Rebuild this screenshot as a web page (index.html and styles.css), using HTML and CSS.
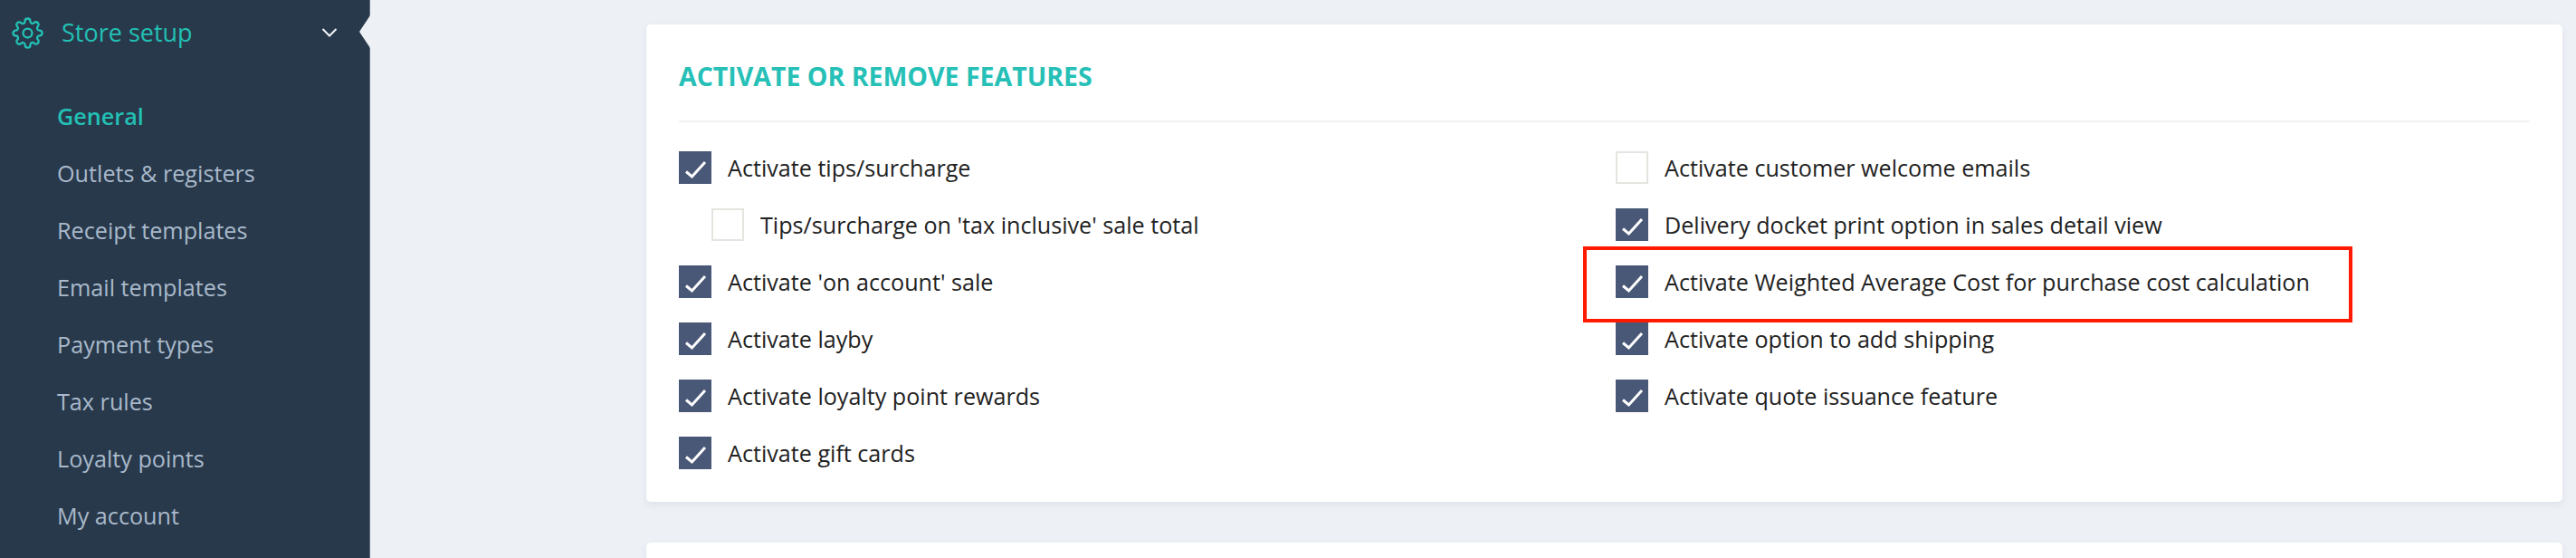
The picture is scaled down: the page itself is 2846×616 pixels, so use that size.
FILE: index.html
```html
<!DOCTYPE html>
<html lang="en">
<head>
<meta charset="utf-8">
<title>Store setup</title>
<link rel="stylesheet" href="styles.css">
</head>
<body>
<div class="page">
  <aside class="sidebar">
    <div class="sidebar-head">
      <svg class="gear" viewBox="0 0 24 24" fill="none" stroke="currentColor" stroke-width="1.6" stroke-linecap="round" stroke-linejoin="round"><circle cx="12" cy="12" r="3.4"/><path d="M19.4 15a1.65 1.65 0 0 0 .33 1.82l.06.06a2 2 0 0 1 0 2.83 2 2 0 0 1-2.83 0l-.06-.06a1.65 1.65 0 0 0-1.82-.33 1.65 1.65 0 0 0-1 1.51V21a2 2 0 0 1-2 2 2 2 0 0 1-2-2v-.09A1.65 1.65 0 0 0 9 19.4a1.65 1.65 0 0 0-1.82.33l-.06.06a2 2 0 0 1-2.83 0 2 2 0 0 1 0-2.83l.06-.06a1.65 1.65 0 0 0 .33-1.82 1.65 1.65 0 0 0-1.51-1H3a2 2 0 0 1-2-2 2 2 0 0 1 2-2h.09A1.65 1.65 0 0 0 4.6 9a1.65 1.65 0 0 0-.33-1.82l-.06-.06a2 2 0 0 1 0-2.83 2 2 0 0 1 2.83 0l.06.06a1.65 1.65 0 0 0 1.82.33H9a1.65 1.65 0 0 0 1-1.51V3a2 2 0 0 1 2-2 2 2 0 0 1 2 2v.09a1.65 1.65 0 0 0 1 1.51 1.65 1.65 0 0 0 1.82-.33l.06-.06a2 2 0 0 1 2.83 0 2 2 0 0 1 0 2.83l-.06.06a1.65 1.65 0 0 0-.33 1.82V9a1.65 1.65 0 0 0 1.51 1H21a2 2 0 0 1 2 2 2 2 0 0 1-2 2h-.09a1.65 1.65 0 0 0-1.51 1z"/></svg>
      <span class="sidebar-title">Store setup</span>
      <svg class="chevron" viewBox="0 0 18 10" fill="none" stroke="currentColor" stroke-width="2"><path d="M1.5 1l7.5 7.5L16.500 1"/></svg>
      <span class="notch"></span>
    </div>
    <nav class="nav">
      <a class="nav-item active">General</a>
      <a class="nav-item">Outlets &amp; registers</a>
      <a class="nav-item">Receipt templates</a>
      <a class="nav-item">Email templates</a>
      <a class="nav-item">Payment types</a>
      <a class="nav-item">Tax rules</a>
      <a class="nav-item">Loyalty points</a>
      <a class="nav-item">My account</a>
    </nav>
  </aside>
  <main class="main">
    <section class="card">
      <h2 class="card-title">ACTIVATE OR REMOVE FEATURES</h2>
      <div class="columns">
        <div class="column">
          <div class="row"><span class="box on"><svg viewBox="0 0 36 36"><path d="M8 22.500l6.500 5.500L29 12"/></svg></span><span>Activate tips/surcharge</span></div>
          <div class="row sub"><span class="box"></span><span>Tips/surcharge on 'tax inclusive' sale total</span></div>
          <div class="row"><span class="box on"><svg viewBox="0 0 36 36"><path d="M8 22.500l6.500 5.500L29 12"/></svg></span><span>Activate 'on account' sale</span></div>
          <div class="row"><span class="box on"><svg viewBox="0 0 36 36"><path d="M8 22.500l6.500 5.500L29 12"/></svg></span><span>Activate layby</span></div>
          <div class="row"><span class="box on"><svg viewBox="0 0 36 36"><path d="M8 22.500l6.500 5.500L29 12"/></svg></span><span>Activate loyalty point rewards</span></div>
          <div class="row"><span class="box on"><svg viewBox="0 0 36 36"><path d="M8 22.500l6.500 5.500L29 12"/></svg></span><span>Activate gift cards</span></div>
        </div>
        <div class="column">
          <div class="row"><span class="box"></span><span>Activate customer welcome emails</span></div>
          <div class="row"><span class="box on"><svg viewBox="0 0 36 36"><path d="M8 22.500l6.500 5.500L29 12"/></svg></span><span>Delivery docket print option in sales detail view</span></div>
          <div class="row marked"><span class="box on"><svg viewBox="0 0 36 36"><path d="M8 22.500l6.500 5.500L29 12"/></svg></span><span>Activate Weighted Average Cost for purchase cost calculation</span><span class="callout"></span></div>
          <div class="row"><span class="box on"><svg viewBox="0 0 36 36"><path d="M8 22.500l6.500 5.500L29 12"/></svg></span><span>Activate option to add shipping</span></div>
          <div class="row"><span class="box on"><svg viewBox="0 0 36 36"><path d="M8 22.500l6.500 5.500L29 12"/></svg></span><span>Activate quote issuance feature</span></div>
        </div>
      </div>
    </section>
    <section class="card next"></section>
  </main>
</div>
</body>
</html>
```

FILE: styles.css
```css
* { box-sizing: border-box; }
html, body { margin: 0; height: 100%; overflow: hidden; }
body { background: #edf0f5; font-family: "Open Sans", "Noto Sans", sans-serif; color: #222; }
.page { display: flex; height: 616px; overflow: hidden; }

.sidebar { width: 409px; flex: none; background: #28394b; border-right: 1px solid #5d6d7e; }
.sidebar-head { position: relative; display: flex; align-items: center; height: 72px; padding-left: 13px; color: #22c0b5; }
.gear { width: 35px; height: 35px; flex: none; }
.sidebar-title { margin-left: 20px; font-size: 27px; line-height: 36px; }
.chevron { position: absolute; left: 355px; top: 31px; width: 18px; height: 10px; color: #f2f5f7; }
.notch { position: absolute; right: -1px; top: 17px; width: 12px; height: 36px; background: #edf0f5; clip-path: polygon(100% 0, 0 50%, 100% 100%); }

.nav { display: flex; flex-direction: column; margin-top: 25px; }
.nav-item { height: 63px; line-height: 63px; padding-left: 63px; font-size: 25.2px; color: #a9b9cb; }
.nav-item.active { color: #22c0b5; font-weight: 600; }

.main { flex: 1; min-width: 0; padding: 27px 15px 0 305px; display: flex; flex-direction: column; gap: 45px; }
.card { flex: none; height: 527px; padding: 0 36px; background: #fff; border-radius: 5px; box-shadow: 0 3px 8px rgba(60, 75, 100, .08); }
.card.next { height: 120px; }
.card-title { margin: 0; height: 108px; padding-top: 36px; font-size: 28.5px; line-height: 42px; font-weight: 700; color: #26c0b7; border-bottom: 2px solid #f0f2f5; }

.columns { display: grid; grid-template-columns: 1035px 1fr; margin-top: 32px; }
.row { position: relative; display: flex; align-items: center; gap: 18px; height: 63px; padding-bottom: 27px; font-size: 25.15px; line-height: 36px; color: #222; white-space: nowrap; }
.row.sub { padding-left: 36px; }
.box { flex: none; width: 36px; height: 36px; background: #fff; border: 2px solid #e6e4df; }
.box.on { background: #4a5877; border: 0; }
.box svg { display: block; width: 36px; height: 36px; fill: none; stroke: #fff; stroke-width: 3; }
.callout { position: absolute; left: -36px; top: -21px; width: 850px; height: 84px; border: 4px solid #ff1a00; }
```
